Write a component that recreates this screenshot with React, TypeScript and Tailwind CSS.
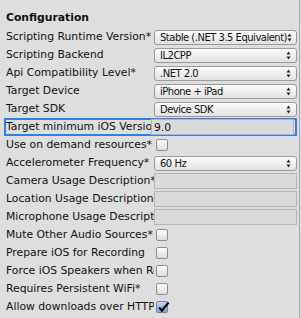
import React from 'react';

type Row =
  | { label: string; kind: 'select'; value: string }
  | { label: string; kind: 'text'; value?: string; focused?: boolean }
  | { label: string; kind: 'check'; checked?: boolean };

const rows: Row[] = [
  { label: 'Scripting Runtime Version*', kind: 'select', value: 'Stable (.NET 3.5 Equivalent)' },
  { label: 'Scripting Backend', kind: 'select', value: 'IL2CPP' },
  { label: 'Api Compatibility Level*', kind: 'select', value: '.NET 2.0' },
  { label: 'Target Device', kind: 'select', value: 'iPhone + iPad' },
  { label: 'Target SDK', kind: 'select', value: 'Device SDK' },
  { label: 'Target minimum iOS Version', kind: 'text', value: '9.0', focused: true },
  { label: 'Use on demand resources*', kind: 'check' },
  { label: 'Accelerometer Frequency*', kind: 'select', value: '60 Hz' },
  { label: 'Camera Usage Description*', kind: 'text' },
  { label: 'Location Usage Description', kind: 'text' },
  { label: 'Microphone Usage Description', kind: 'text' },
  { label: 'Mute Other Audio Sources*', kind: 'check' },
  { label: 'Prepare iOS for Recording', kind: 'check' },
  { label: 'Force iOS Speakers when Recording', kind: 'check' },
  { label: 'Requires Persistent WiFi*', kind: 'check' },
  { label: 'Allow downloads over HTTP', kind: 'check', checked: true },
];

const Arrows = () => (
  <svg width="5" height="9" viewBox="0 0 5 9" className="shrink-0">
    <path d="M0.5 3.5 L2.5 0.5 L4.5 3.5 Z" fill="#222" />
    <path d="M0.5 5.5 L2.5 8.5 L4.5 5.5 Z" fill="#222" />
  </svg>
);

const Field = ({ row }: { row: Row }) => {
  if (row.kind === 'select') {
    return (
      <div className="flex h-[15px] w-[143px] items-center justify-between rounded-[3px] border border-[#9a9a9a] bg-gradient-to-b from-[#fbfbfb] to-[#e2e2e2] pl-[5px] pr-[5px] text-[10px] leading-[13px] tracking-[-0.5px] text-[#111]">
        <span className="whitespace-nowrap">{row.value}</span>
        <Arrows />
      </div>
    );
  }
  if (row.kind === 'text') {
    return (
      <div className="flex h-[16px] w-[143px] items-center border border-[#b4b4b4] bg-[#dadada] pl-[2px] text-[10.8px] leading-[13px] text-[#111]">
        {row.value}
      </div>
    );
  }
  return (
    <div
      className={
        row.checked
          ? 'relative ml-[2px] h-[12px] w-[12px] rounded-[2px] border border-[#6d83a6] bg-gradient-to-b from-[#c4d6f2] to-[#8aa9d8]'
          : 'ml-[2px] h-[12px] w-[12px] rounded-[2px] border border-[#8e8e8e] bg-gradient-to-b from-[#fdfdfd] to-[#dcdcdc]'
      }
    >
      {row.checked && (
        <svg width="14" height="12" viewBox="0 0 14 12" className="absolute -top-[1px] left-0">
          <path d="M2 6.5 L5 9.5 L11.5 1.5" fill="none" stroke="#000" strokeWidth="2.2" />
        </svg>
      )}
    </div>
  );
};

export default function App() {
  return (
    <div
      className="h-[318px] w-[301px] overflow-hidden bg-[#dedede] text-[#111]"
      style={{ fontFamily: '"DejaVu Sans", "Liberation Sans", sans-serif' }}
    >
      <div className="flex h-full w-[300px] flex-col border-r border-[#a8a8a8] pt-[9px]">
        <div className="flex h-[19px] items-center pl-[6px] text-[10.8px] font-bold">Configuration</div>
        {rows.map((row) => {
          const focused = row.kind === 'text' && row.focused;
          return (
            <div
              key={row.label}
              className={
                focused
                  ? 'mx-[4px] flex h-[18px] w-[293px] items-center border-2 border-[#2f80e6]'
                  : 'flex h-[18px] items-center pl-[6px]'
              }
            >
              <div
                className={
                  focused
                    ? 'w-[145px] shrink-0 overflow-hidden whitespace-nowrap text-[10.8px] leading-[14px]'
                    : 'w-[148px] shrink-0 overflow-hidden whitespace-nowrap text-[10.8px] leading-[14px]'
                }
              >
                {row.label}
              </div>
              <Field row={row} />
            </div>
          );
        })}
      </div>
    </div>
  );
}
